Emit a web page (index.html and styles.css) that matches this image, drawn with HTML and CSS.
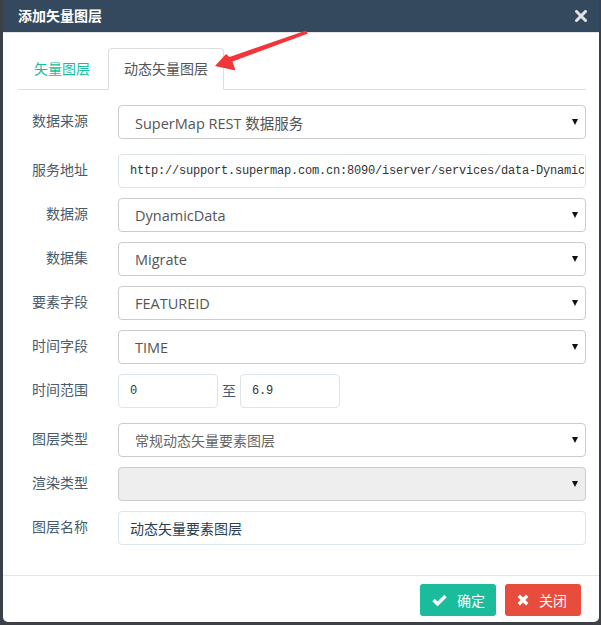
FILE: index.html
```html
<!DOCTYPE html>
<html lang="zh">
<head>
<meta charset="utf-8">
<title>添加矢量图层</title>
<link rel="stylesheet" href="styles.css">
</head>
<body>
<div class="modal">
  <div class="modal-header">
    <span class="modal-title">添加矢量图层</span>
    <svg class="close-icon" width="12" height="12" viewBox="0 0 12 12"><path d="M1.5 1.5 L10.5 10.5 M10.5 1.5 L1.5 10.5" stroke="#dfe3e6" stroke-width="3" stroke-linecap="square"/></svg>
  </div>
  <div class="tabs">
    <div class="tab">矢量图层</div>
    <div class="tab active">动态矢量图层</div>
  </div>
  <div class="form">
    <div class="row row-gap-lg">
      <div class="label">数据来源</div>
      <div class="control select"><span class="val">SuperMap REST 数据服务</span><span class="caret"></span></div>
    </div>
    <div class="row">
      <div class="label">服务地址</div>
      <input class="control input mono url" type="text" readonly value="http://support.supermap.com.cn:8090/iserver/services/data-DynamicData/rest/data">
    </div>
    <div class="row">
      <div class="label">数据源</div>
      <div class="control select"><span class="val">DynamicData</span><span class="caret"></span></div>
    </div>
    <div class="row">
      <div class="label">数据集</div>
      <div class="control select"><span class="val">Migrate</span><span class="caret"></span></div>
    </div>
    <div class="row">
      <div class="label">要素字段</div>
      <div class="control select"><span class="val">FEATUREID</span><span class="caret"></span></div>
    </div>
    <div class="row">
      <div class="label">时间字段</div>
      <div class="control select"><span class="val">TIME</span><span class="caret"></span></div>
    </div>
    <div class="row row-gap-lg">
      <div class="label">时间范围</div>
      <div class="range">
        <input class="control input mono small" type="text" readonly value="0">
        <span class="to">至</span>
        <input class="control input mono small" type="text" readonly value="6.9">
      </div>
    </div>
    <div class="row">
      <div class="label">图层类型</div>
      <div class="control select"><span class="val cn">常规动态矢量要素图层</span><span class="caret"></span></div>
    </div>
    <div class="row">
      <div class="label">渲染类型</div>
      <div class="control select disabled"><span class="val"></span><span class="caret"></span></div>
    </div>
    <div class="row">
      <div class="label">图层名称</div>
      <input class="control input cn-input" type="text" readonly value="动态矢量要素图层">
    </div>
  </div>
  <div class="modal-footer">
    <button class="btn btn-ok">
      <svg width="15" height="12" viewBox="0 0 15 12"><path d="M1.5 6 L5.5 10 L13.5 2" fill="none" stroke="#fff" stroke-width="3.4"/></svg>
      <span>确定</span>
    </button>
    <button class="btn btn-close">
      <svg width="12" height="12" viewBox="0 0 12 12"><path d="M1.8 1.8 L10.2 10.2 M10.2 1.8 L1.8 10.2" stroke="#fff" stroke-width="3.4"/></svg>
      <span>关闭</span>
    </button>
  </div>
</div>
<svg class="arrow" width="120" height="60" viewBox="200 20 120 60">
  <polygon points="215,66 226,54 229.5,57 306,30.5 308,33.5 232.5,61.5 235.5,70.5" fill="#f2353a"/>
</svg>
</body>
</html>
```

FILE: styles.css
```css
* { box-sizing: border-box; }
html, body { margin: 0; padding: 0; }
body {
  background: #3b4147;
  width: 601px;
  height: 625px;
  overflow: hidden;
  position: relative;
  font-family: "Noto Sans CJK SC", "Noto Sans", sans-serif;
}
.modal {
  margin-left: 3px;
  width: 596px;
  height: 622px;
  background: #fff;
  border-radius: 0 0 5px 5px;
  display: flex;
  flex-direction: column;
}
.modal-header {
  height: 33px;
  background: #34495e;
  border-bottom: 1px solid #e3e6e8;
  display: flex;
  align-items: center;
  justify-content: space-between;
  padding: 0 12px 0 15px;
}
.modal-title {
  color: #fff;
  font-weight: bold;
  font-size: 14px;
  line-height: 20px;
  padding-bottom: 2px;
}
.close-icon { display: block; }
.tabs {
  display: flex;
  margin: 15px 13px 0 15px;
  border-bottom: 1px solid #dddddd;
  height: 42px;
}
.tab {
  padding: 9px 15px 12px 15px;
  font-size: 14px;
  line-height: 20px;
  color: #1abc9c;
  margin-right: 2px;
  border: 1px solid transparent;
  border-radius: 4px 4px 0 0;
  height: 42px;
}
.tab.active {
  color: #555;
  padding: 9px 15px 12px 15px;
  border-color: #dddddd;
  border-bottom-color: #fff;
  background: #fff;
}
.form {
  padding: 0 13px 0 15px;
  margin-top: 15px;
}
.row {
  display: flex;
  align-items: center;
  height: 34px;
  margin-bottom: 10px;
}
.row-gap-lg { margin-bottom: 15px; }
.label {
  width: 70px;
  margin-right: 30px;
  text-align: right;
  font-size: 14px;
  color: #4a5b6c;
  line-height: 20px;
  padding-bottom: 4px;
  flex-shrink: 0;
}
.control {
  height: 34px;
  flex: 1;
  min-width: 0;
  border-radius: 4px;
  display: flex;
  align-items: center;
  overflow: hidden;
  white-space: nowrap;
  margin: 0;
  outline: none;
}
.select {
  border: 1px solid #cccccc;
  padding: 0 7px 0 16px;
  justify-content: space-between;
  color: #555;
  font-family: "Open Sans", "Noto Sans CJK SC", sans-serif;
  font-size: 14.5px;
}
.select .val.cn {
  font-family: "Noto Sans CJK SC", sans-serif;
  font-size: 14px;
  color: #666;
}
.select.disabled { background: #eeeeee; }
.caret {
  width: 0;
  height: 0;
  border-left: 3.5px solid transparent;
  border-right: 3.5px solid transparent;
  border-top: 6px solid #111;
  flex-shrink: 0;
}
.input {
  border: 1px solid #dde5ec;
  padding: 0 11px;
  color: #2c3e50;
  background: #fff;
  text-overflow: clip;
}
.input.url { padding-right: 1px; }
.mono {
  font-family: "Liberation Mono", monospace;
  font-size: 12px;
  letter-spacing: -0.2px;
  color: #333;
}
.cn-input {
  font-family: "Noto Sans CJK SC", sans-serif;
  font-size: 14px;
  color: #2c3e50;
}
.range {
  display: flex;
  align-items: center;
  flex: 1;
}
.control.small {
  flex: 0 0 100px;
  width: 100px;
}
.to {
  font-size: 14px;
  color: #4a5b6c;
  margin: 0 4px;
  padding-bottom: 3px;
}
.modal-footer {
  margin-top: auto;
  border-top: 1px solid #e5e5e5;
  padding: 8px 18px 6px 0;
  display: flex;
  justify-content: flex-end;
  gap: 9px;
}
.btn {
  height: 32px;
  width: 76px;
  border: none;
  border-radius: 3px;
  color: #fff;
  font-family: "Noto Sans CJK SC", sans-serif;
  font-size: 14px;
  display: flex;
  align-items: center;
  padding: 0 0 0 12px;
  gap: 10px;
}
.btn-ok { background: #1abc9c; }
.btn-close { background: #e74c3c; padding-left: 12px; }
.btn svg { display: block; }
.arrow {
  position: absolute;
  left: 200px;
  top: 20px;
}
```
